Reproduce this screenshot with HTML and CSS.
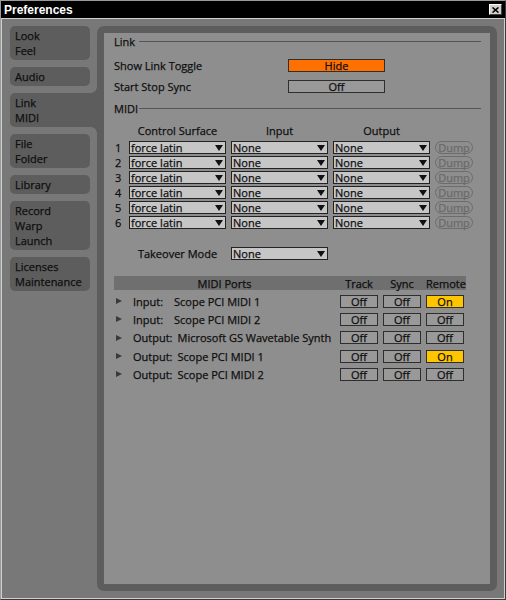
FILE: index.html
```html
<!DOCTYPE html>
<html>
<head>
<meta charset="utf-8">
<link rel="stylesheet" href="styles.css">
</head>
<body>
<div class="window">
  <div class="titlebar">
    <span class="title">Preferences</span>
    <span class="close"><svg width="7" height="6" viewBox="0 0 7 6"><path d="M0.5 0.5 L6.5 5.5 M6.5 0.5 L0.5 5.5" stroke="#000" stroke-width="1.6" fill="none"/></svg></span>
  </div>
  <div class="body">
    <div class="tabs">
      <div class="tab">Look<br>Feel</div>
      <div class="tab">Audio</div>
      <div class="tab active">Link<br>MIDI</div>
      <div class="tab">File<br>Folder</div>
      <div class="tab">Library</div>
      <div class="tab">Record<br>Warp<br>Launch</div>
      <div class="tab">Licenses<br>Maintenance</div>
    </div>
    <div class="frame">
      <div class="panel">
        <div class="section-head"><span class="sh-text">Link</span><i class="rule"></i></div>
        <div class="row r-show"><span class="label">Show Link Toggle</span><span class="btn hide">Hide</span></div>
        <div class="row r-sync"><span class="label">Start Stop Sync</span><span class="btn">Off</span></div>
        <div class="section-head midi-head"><span class="sh-text">MIDI</span><i class="rule"></i></div>
        <div class="grid-head"><span class="num"></span><span class="col">Control Surface</span><span class="col">Input</span><span class="col">Output</span></div>
        <div class="surfaces">
          <div class="srow"><span class="num">1</span><span class="dd">force latin</span><span class="dd">None</span><span class="dd">None</span><span class="dump">Dump</span></div>
          <div class="srow"><span class="num">2</span><span class="dd">force latin</span><span class="dd">None</span><span class="dd">None</span><span class="dump">Dump</span></div>
          <div class="srow"><span class="num">3</span><span class="dd">force latin</span><span class="dd">None</span><span class="dd">None</span><span class="dump">Dump</span></div>
          <div class="srow"><span class="num">4</span><span class="dd">force latin</span><span class="dd">None</span><span class="dd">None</span><span class="dump">Dump</span></div>
          <div class="srow"><span class="num">5</span><span class="dd">force latin</span><span class="dd">None</span><span class="dd">None</span><span class="dump">Dump</span></div>
          <div class="srow"><span class="num">6</span><span class="dd">force latin</span><span class="dd">None</span><span class="dd">None</span><span class="dump">Dump</span></div>
        </div>
        <div class="srow takeover"><span class="num"></span><span class="col">Takeover Mode</span><span class="dd">None</span></div>
        <div class="ports">
          <div class="ports-head"><span class="ph-name">MIDI Ports</span><span class="ph">Track</span><span class="ph">Sync</span><span class="ph">Remote</span></div>
          <div class="prow"><i class="tri"></i><span class="pl">Input:</span><span class="pn">Scope PCI MIDI 1</span><span class="pbtn">Off</span><span class="pbtn">Off</span><span class="pbtn on">On</span></div>
          <div class="prow"><i class="tri"></i><span class="pl">Input:</span><span class="pn">Scope PCI MIDI 2</span><span class="pbtn">Off</span><span class="pbtn">Off</span><span class="pbtn">Off</span></div>
          <div class="prow tall"><i class="tri"></i><span class="pl out">Output:</span><span class="pn">Microsoft GS Wavetable Synth</span><span class="pbtn">Off</span><span class="pbtn">Off</span><span class="pbtn">Off</span></div>
          <div class="prow"><i class="tri"></i><span class="pl out">Output:</span><span class="pn">Scope PCI MIDI 1</span><span class="pbtn">Off</span><span class="pbtn">Off</span><span class="pbtn on">On</span></div>
          <div class="prow"><i class="tri"></i><span class="pl out">Output:</span><span class="pn">Scope PCI MIDI 2</span><span class="pbtn">Off</span><span class="pbtn">Off</span><span class="pbtn">Off</span></div>
        </div>
      </div>
    </div>
  </div>
</div>
</body>
</html>
```
FILE: styles.css
```css
* { box-sizing: border-box; }
html, body { margin: 0; padding: 0; }
body {
  width: 506px; height: 600px; overflow: hidden;
  font-family: "Open Sans", "DejaVu Sans", sans-serif;
  font-size: 11px; color: #0e0e0e; background: #000;
  -webkit-text-stroke: 0.25px currentColor;
}
.window {
  width: 506px; height: 600px;
  border: 1px solid #9a9a9a;
  border-right-color: #3a3a3a; border-bottom-color: #3a3a3a;
  display: flex; flex-direction: column; background: #000;
}
.titlebar {
  height: 17px; flex: none; background: #000;
  display: flex; align-items: center; justify-content: space-between;
  padding: 0 3px 0 3px;
}
.title {
  font-family: "Liberation Sans", Arial, sans-serif;
  font-weight: bold; font-size: 12px; color: #fff;
  -webkit-text-stroke: 0;
}
.close {
  width: 13px; height: 11px; background: #d4d0c8;
  border: 1px solid; border-color: #fff #404040 #404040 #fff;
  display: flex; align-items: center; justify-content: center;
}
.close svg { display: block; }
.body {
  flex: 1; display: flex; gap: 7px;
  border: 1px solid #cfcfcf; background: #787878;
  padding: 7px 7px 7px 8px;
}
.tabs { width: 80px; flex: none; display: flex; flex-direction: column; gap: 7px; }
.tab {
  background: #5d5d5d; border-radius: 5px;
  padding: 2px 5px; line-height: 15px; position: relative;
}
.tab.active { margin-right: -7px; border-radius: 5px 0 0 5px; }
.tab.active::before, .tab.active::after {
  content: ""; position: absolute; right: 0; width: 6px; height: 6px;
}
.tab.active::before { top: -6px; background: radial-gradient(circle at 0 0, transparent 5.5px, #5d5d5d 6px); }
.tab.active::after { bottom: -6px; background: radial-gradient(circle at 0 100%, transparent 5.5px, #5d5d5d 6px); }
.frame { flex: 1; background: #5d5d5d; border-radius: 7px; padding: 7px; display: flex; }
.panel {
  flex: 1; background: #8e8e8e;
  padding: 1px 9px 0 10px;
  display: flex; flex-direction: column;
}
.section-head { height: 14px; display: flex; align-items: center; }
.sh-text { width: 25px; flex: none; }
.rule { flex: 1; height: 1px; background: #555; }
.midi-head { margin-top: 8px; }
.row { height: 13px; display: flex; align-items: center; }
.r-show { margin-top: 11px; }
.r-sync { margin-top: 8px; }
.label { width: 174px; flex: none; }
.btn {
  width: 97px; height: 13px; border: 1px solid #2e2e2e;
  background: #999; text-align: center; line-height: 11px;
}
.btn.hide { background: #ff7000; }
.grid-head { margin-top: 8px; height: 14px; display: flex; align-items: center; gap: 5px; }
.num { width: 15px; flex: none; margin-right: -5px; padding-left: 1px; }
.col { width: 97px; flex: none; text-align: center; }
.surfaces { margin-top: 4px; display: flex; flex-direction: column; gap: 2px; }
.srow { height: 13px; display: flex; align-items: center; gap: 5px; }
.dd {
  width: 97px; height: 13px; flex: none;
  border: 1px solid #222; background: #c6c6c6;
  display: flex; align-items: center; padding-left: 1px; line-height: 11px;
}
.dd::after {
  content: ""; margin-left: auto; margin-right: 2px;
  border-left: 4px solid transparent; border-right: 4px solid transparent;
  border-top: 6px solid #111;
}
.dump {
  width: 38px; height: 13px; flex: none;
  border: 1px solid #6c6c6c; border-radius: 7px;
  color: #6a6a6a; text-align: center; line-height: 11px;
}
.takeover { margin-top: 18px; }
.ports { margin-top: 16px; width: 352px; display: flex; flex-direction: column; }
.ports-head {
  height: 14px; background: #6f6f6f;
  display: flex; align-items: center; gap: 5px; padding-right: 2px;
  margin-bottom: 2px;
}
.ph-name { flex: 1; text-align: center; }
.ph { width: 38px; flex: none; text-align: center; }
.prow { height: 18px; display: flex; align-items: center; gap: 5px; padding-right: 2px; }
.prow.tall { height: 19px; }
.tri {
  flex: none; margin-left: 2px; margin-right: 6px; width: 0; height: 0;
  border-top: 3.5px solid transparent; border-bottom: 3.5px solid transparent;
  border-left: 6px solid #3a3a3a;
}
.pl { min-width: 36px; flex: none; }
.pn { flex: 1; white-space: nowrap; }
.pbtn {
  width: 38px; height: 13px; flex: none;
  border: 1px solid #2e2e2e; background: #999;
  text-align: center; line-height: 11px;
}
.pbtn.on { background: #ffc600; }
```
